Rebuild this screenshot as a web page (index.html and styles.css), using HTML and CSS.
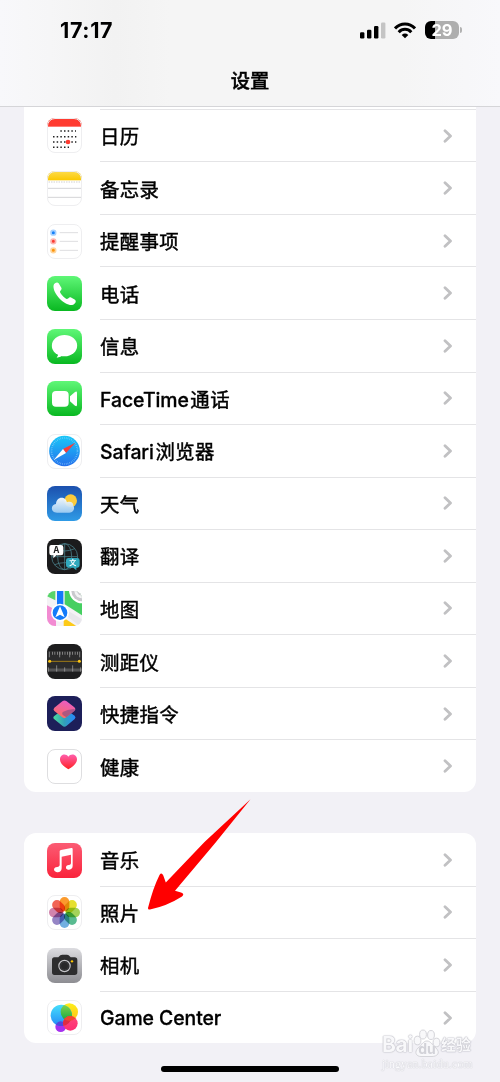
FILE: index.html
```html
<!DOCTYPE html>
<html lang="zh-CN">
<head>
<meta charset="utf-8">
<title>设置</title>
<link rel="stylesheet" href="styles.css">
</head>
<body>
<div class="phone">
  <header class="header">
    <div class="status">
      <span class="time">17:17</span>
      <svg class="signal" viewBox="0 0 26 17"><rect x="0" y="10.3" width="4.4" height="6.2" rx="1.2"/><rect x="7" y="7.8" width="4.4" height="8.7" rx="1.2"/><rect x="14" y="4" width="4.4" height="12.5" rx="1.2"/><rect x="21" y=".5" width="4.4" height="16" rx="1.2" fill="#c4c4c4"/></svg>
      <svg class="wifi" viewBox="0 0 22 17" fill="none" stroke="#000" stroke-width="3"><path d="M1 6.500C6.500.5 15.500.5 21 6.500"/><path d="M4.700 10.200C8.300 6.400 13.700 6.400 17.300 10.200"/><path d="M11 16.200L7.700 12.900Q11 10.200 14.300 12.900Z" fill="#000" stroke="none"/></svg>
      <div class="battery"><span>29</span></div>
      <i class="battery-cap"></i>
    </div>
    <h1 class="title">设置</h1>
  </header>
  <main class="content">
    <section class="card card-first">
      <div class="row">
        <svg class="icon outlined" viewBox="0 0 105 105"><rect width="105" height="105" fill="#fff"/><rect width="105" height="26" fill="#ff3b30"/><g stroke="#222" stroke-width="4.500" stroke-dasharray="4.500 6.500"><path d="M40 39H87M18 56H88M18 72H88M18 88H66"/></g><circle cx="63" cy="72" r="7" fill="#ff3b30"/></svg>
        <div class="cell"><span>日历</span><svg class="chev" viewBox="0 0 10 14"><path d="M2 1.700L7.500 7L2 12.300"/></svg></div>
      </div>
      <div class="row">
        <svg class="icon outlined" viewBox="0 0 105 105"><defs><linearGradient id="note" x2="0" y2="1"><stop stop-color="#fddc4e"/><stop offset="1" stop-color="#fbc800"/></linearGradient></defs><rect width="105" height="105" fill="#fff"/><rect width="105" height="28" fill="url(#note)"/><path d="M2 33H103" stroke="#b9b9b9" stroke-width="3" stroke-dasharray="2 3"/><path d="M0 52H105M0 79H105" stroke="#d4d4d6" stroke-width="3"/></svg>
        <div class="cell"><span>备忘录</span><svg class="chev" viewBox="0 0 10 14"><path d="M2 1.700L7.500 7L2 12.300"/></svg></div>
      </div>
      <div class="row">
        <svg class="icon outlined" viewBox="0 0 105 105"><rect width="105" height="105" fill="#fff"/><g stroke-width="5"><circle cx="19" cy="26" r="7" fill="#1681fb" stroke="#a6d0fe"/><circle cx="19" cy="52" r="7" fill="#fb3b32" stroke="#fdb4b0"/><circle cx="19" cy="79" r="7" fill="#fd9409" stroke="#fed59c"/></g><path d="M38 26H93M38 52H93M38 79H93" stroke="#dedee0" stroke-width="3"/></svg>
        <div class="cell"><span>提醒事项</span><svg class="chev" viewBox="0 0 10 14"><path d="M2 1.700L7.500 7L2 12.300"/></svg></div>
      </div>
      <div class="row">
        <svg class="icon" viewBox="0 0 105 105"><defs><linearGradient id="green" x2="0" y2="1"><stop stop-color="#5ff777"/><stop offset="1" stop-color="#09b821"/></linearGradient></defs><rect width="105" height="105" fill="url(#green)"/><path d="M20 27C22 21 31 16 35 22L43 35C46 40 39 43 39 48C42 56 52 66 59 69C64 69 66 62 71 64L84 71C90 76 83 84 78 86C68 90 50 80 38 68C26 56 17 38 20 27Z" fill="#fff"/></svg>
        <div class="cell"><span>电话</span><svg class="chev" viewBox="0 0 10 14"><path d="M2 1.700L7.500 7L2 12.300"/></svg></div>
      </div>
      <div class="row">
        <svg class="icon" viewBox="0 0 105 105"><rect width="105" height="105" fill="url(#green)"/><ellipse cx="52.500" cy="50" rx="38" ry="32" fill="#fff"/><path d="M33 72Q36 79 29 86Q42 84 49 77Z" fill="#fff"/></svg>
        <div class="cell"><span>信息</span><svg class="chev" viewBox="0 0 10 14"><path d="M2 1.700L7.500 7L2 12.300"/></svg></div>
      </div>
      <div class="row">
        <svg class="icon" viewBox="0 0 105 105"><rect width="105" height="105" fill="url(#green)"/><rect x="15" y="30" width="50" height="47" rx="12" fill="#fff"/><path d="M69 46L84 33Q90 29 90 36V71Q90 78 84 74L69 61Z" fill="#fff"/></svg>
        <div class="cell"><span><span class="latin face">FaceTime</span>通话</span><svg class="chev" viewBox="0 0 10 14"><path d="M2 1.700L7.500 7L2 12.300"/></svg></div>
      </div>
      <div class="row">
        <svg class="icon outlined" viewBox="0 0 105 105"><defs><linearGradient id="safari" x2="0" y2="1"><stop stop-color="#19c8f8"/><stop offset="1" stop-color="#2570ec"/></linearGradient></defs><rect width="105" height="105" fill="#fff"/><circle cx="52.500" cy="51" r="46" fill="url(#safari)"/><circle cx="52.500" cy="51" r="39" fill="none" stroke="#8fd0fa" stroke-width="5" stroke-dasharray="1.500 4"/><path d="M85 26L48 45L57 57Z" fill="#f93d38"/><path d="M20 78L48 45L57 57Z" fill="#fff"/></svg>
        <div class="cell"><span><span class="latin safari">Safari</span>浏览器</span><svg class="chev" viewBox="0 0 10 14"><path d="M2 1.700L7.500 7L2 12.300"/></svg></div>
      </div>
      <div class="row">
        <svg class="icon" viewBox="0 0 105 105"><defs><linearGradient id="sky" x2="0" y2="1"><stop stop-color="#1c50ae"/><stop offset="1" stop-color="#2f9be6"/></linearGradient><linearGradient id="cloud" x2="0" y2="1"><stop stop-color="#fff"/><stop offset="1" stop-color="#a3cff3"/></linearGradient></defs><rect width="105" height="105" fill="url(#sky)"/><circle cx="71" cy="44" r="19" fill="#fbcb3c"/><path d="M30 80C10 80 10 55 27 54C27 39 43 29 55 40C59 44 59 48 60 49C72 44 80 52 79 59C85 66 79 80 67 80Z" fill="url(#cloud)" opacity=".93"/></svg>
        <div class="cell"><span>天气</span><svg class="chev" viewBox="0 0 10 14"><path d="M2 1.700L7.500 7L2 12.300"/></svg></div>
      </div>
      <div class="row">
        <svg class="icon" viewBox="0 0 105 105"><rect width="105" height="105" fill="#1b1b1c"/><g fill="none" stroke="#477b84" stroke-width="2.500"><circle cx="53" cy="53" r="39"/><ellipse cx="53" cy="53" rx="21" ry="39"/><path d="M53 14V92M14 53H92M23 29Q53 43 83 29M23 77Q53 65 83 77"/></g><path d="M13 18H42Q49 18 49 25V42Q49 49 42 49H28L19 58V49H13Q7 49 7 42V25Q7 18 13 18Z" fill="#fff"/><path d="M64 57H91Q98 57 98 64V79Q98 86 91 86H88V94L79 86H64Q57 86 57 79V64Q57 57 64 57Z" fill="#31a9bd"/><text class="glyph-a" x="28" y="41">A</text><text class="glyph-w" x="77" y="79">文</text></svg>
        <div class="cell"><span>翻译</span><svg class="chev" viewBox="0 0 10 14"><path d="M2 1.700L7.500 7L2 12.300"/></svg></div>
      </div>
      <div class="row">
        <svg class="icon" viewBox="0 0 105 105"><rect width="105" height="105" fill="#f4f2f5"/><path d="M0 0H25V28L0 16Z" fill="#58d56a"/><path d="M53 0H105V73L53 40Z" fill="#45cf61"/><path d="M66 0A40 40 0 0 0 105 37V0Z" fill="#fff"/><path d="M73 0A32 32 0 0 0 105 31V0Z" fill="#c9c9cd"/><path d="M82 0A23 23 0 0 0 105 22V0Z" fill="#f3f3f4"/><path d="M90 0A15 15 0 0 0 105 14V0Z" fill="#c9c9cd"/><path d="M0 43L27 57V105H0Z" fill="#f28bd2"/><path d="M50 80L88 105H50Z" fill="#fdca19"/><path d="M68 62L105 85V105H98L60 76Z" fill="#e8e7ec"/><path d="M30 0H49V52H30Z" fill="#1478fa"/><circle cx="39" cy="65" r="27" fill="#fff"/><circle cx="39" cy="65" r="22" fill="#147bfa"/><path d="M39 46L53 79L39 71L25 79Z" fill="#fff"/></svg>
        <div class="cell"><span>地图</span><svg class="chev" viewBox="0 0 10 14"><path d="M2 1.700L7.500 7L2 12.300"/></svg></div>
      </div>
      <div class="row">
        <svg class="icon" viewBox="0 0 105 105"><rect width="105" height="105" fill="#1d1d1e"/><path d="M0 21H105V83H0Z" fill="#2b2b2c"/><g stroke="#aaa" stroke-width="2"><path d="M7 23V40M38 23V40M68 23V40M98 23V40M29 64V83M77 64V83M53 70V83M4 70V83M101 70V83"/><path d="M15 28H97" stroke-width="9" stroke-dasharray="2 5.600"/><path d="M5 78H103" stroke-width="9" stroke-dasharray="2 4"/></g><path d="M8 52H97" stroke="#b78b12" stroke-width="2.500"/><circle cx="8" cy="52" r="4.500" fill="#ffc817"/><circle cx="97" cy="52" r="4.500" fill="#ffc817"/></svg>
        <div class="cell"><span>测距仪</span><svg class="chev" viewBox="0 0 10 14"><path d="M2 1.700L7.500 7L2 12.300"/></svg></div>
      </div>
      <div class="row">
        <svg class="icon" viewBox="0 0 105 105"><defs><linearGradient id="sc1" x2="1" y2="0"><stop stop-color="#4bdc9c"/><stop offset=".5" stop-color="#329fb9"/><stop offset="1" stop-color="#2588ff"/></linearGradient><linearGradient id="sc2" x1=".7" y1="0" x2=".3" y2="1"><stop stop-color="#e95bc9"/><stop offset=".9" stop-color="#fa6b67"/></linearGradient></defs><rect width="105" height="105" fill="#1d1f59"/><path d="M47 41Q52 38 57 41L83 59Q88 64 83 69L59 89Q52 95 46 89L22 70Q16 65 22 60Z" fill="url(#sc1)"/><path d="M46 16Q52 11 59 16L82 34Q88 40 82 45L58 64Q52 69 46 64L22 45Q17 40 22 35Z" fill="url(#sc2)"/><path d="M62 42L80 39Q87 41 82 45L58 64L49 58Q42 52 49 47Z" fill="#7c4c80" opacity=".6"/></svg>
        <div class="cell"><span>快捷指令</span><svg class="chev" viewBox="0 0 10 14"><path d="M2 1.700L7.500 7L2 12.300"/></svg></div>
      </div>
      <div class="row">
        <svg class="icon outlined dark" viewBox="0 0 105 105"><defs><linearGradient id="heart" x2="0" y2="1"><stop stop-color="#ff5fae"/><stop offset="1" stop-color="#ff2224"/></linearGradient></defs><rect width="105" height="105" fill="#fff"/><path d="M64 61C49 52 39 43 39 31C39 14 58 12 64 23C71 12 90 15 90 31C90 43 78 53 64 61Z" fill="url(#heart)"/></svg>
        <div class="cell"><span>健康</span><svg class="chev" viewBox="0 0 10 14"><path d="M2 1.700L7.500 7L2 12.300"/></svg></div>
      </div>
    </section>
    <section class="card">
      <div class="row">
        <svg class="icon" viewBox="0 0 105 105"><defs><linearGradient id="music" x2="0" y2="1"><stop stop-color="#fb5c74"/><stop offset="1" stop-color="#fa233b"/></linearGradient></defs><rect width="105" height="105" fill="url(#music)"/><path d="M38 25Q38 22 42 21L73 15Q77 14 77 18V69C77 78 69 81 63 80C54 79 56 68 62 67L69 65Q72 64 72 60V35L44 41V76C44 86 35 89 28 87C19 85 19 75 27 73L34 71Q38 70 38 66Z" fill="#fff"/></svg>
        <div class="cell"><span>音乐</span><svg class="chev" viewBox="0 0 10 14"><path d="M2 1.700L7.500 7L2 12.300"/></svg></div>
      </div>
      <div class="row">
        <svg class="icon outlined" viewBox="0 0 105 105"><rect width="105" height="105" fill="#fff"/><g class="petals"><rect x="38" y="6" width="29" height="43" rx="14.500" fill="#fb9a2d"/><rect x="38" y="6" width="29" height="43" rx="14.500" fill="#e5e02f" transform="rotate(45 52.500 52.500)"/><rect x="38" y="6" width="29" height="43" rx="14.500" fill="#a4d35a" transform="rotate(90 52.500 52.500)"/><rect x="38" y="6" width="29" height="43" rx="14.500" fill="#59bb91" transform="rotate(135 52.500 52.500)"/><rect x="38" y="6" width="29" height="43" rx="14.500" fill="#71afe1" transform="rotate(180 52.500 52.500)"/><rect x="38" y="6" width="29" height="43" rx="14.500" fill="#9585c5" transform="rotate(225 52.500 52.500)"/><rect x="38" y="6" width="29" height="43" rx="14.500" fill="#d284ad" transform="rotate(270 52.500 52.500)"/><rect x="38" y="6" width="29" height="43" rx="14.500" fill="#f16456" transform="rotate(315 52.500 52.500)"/></g></svg>
        <div class="cell"><span>照片</span><svg class="chev" viewBox="0 0 10 14"><path d="M2 1.700L7.500 7L2 12.300"/></svg></div>
      </div>
      <div class="row">
        <svg class="icon" viewBox="0 0 105 105"><defs><linearGradient id="cam" x2="0" y2="1"><stop stop-color="#dcdce0"/><stop offset="1" stop-color="#8d8d92"/></linearGradient></defs><rect width="105" height="105" fill="url(#cam)"/><path d="M22 28H34L40 22Q42 20 46 20H60Q63 20 65 22L71 28H83Q91 28 91 36V73Q91 81 83 81H22Q15 81 15 73V36Q15 28 22 28Z" fill="#2d2d2e"/><circle cx="52.500" cy="54" r="17" fill="#282829" stroke="#c4c4c7" stroke-width="3.500"/><circle cx="52.500" cy="54" r="12" fill="none" stroke="#404042" stroke-width="2"/><circle cx="75" cy="40" r="3.500" fill="#ffc800"/></svg>
        <div class="cell"><span>相机</span><svg class="chev" viewBox="0 0 10 14"><path d="M2 1.700L7.500 7L2 12.300"/></svg></div>
      </div>
      <div class="row">
        <svg class="icon outlined" viewBox="0 0 105 105"><defs><linearGradient id="gb" x2="0" y2="1"><stop stop-color="#46dffb"/><stop offset="1" stop-color="#238bf7"/></linearGradient><linearGradient id="gy" x2="0" y2="1"><stop stop-color="#fdef1a"/><stop offset="1" stop-color="#ffc018"/></linearGradient><linearGradient id="gg" x2="0" y2="1"><stop stop-color="#8cd64b"/><stop offset="1" stop-color="#16a844"/></linearGradient><linearGradient id="gp" x2="0" y2="1"><stop stop-color="#ff487c"/><stop offset="1" stop-color="#fd2d72"/></linearGradient><clipPath id="blueclip"><circle cx="43" cy="46" r="32"/></clipPath><clipPath id="pinkclip"><circle cx="70" cy="70" r="22"/></clipPath></defs><rect width="105" height="105" fill="#fff"/><circle cx="41" cy="80" r="16" fill="#a630ef"/><circle cx="67" cy="36" r="26" fill="url(#gy)"/><circle cx="43" cy="46" r="32" fill="url(#gb)"/><g clip-path="url(#blueclip)"><circle cx="67" cy="36" r="26" fill="url(#gg)"/><circle cx="41" cy="80" r="16" fill="#5148dd"/></g><circle cx="70" cy="70" r="22" fill="url(#gp)"/><g clip-path="url(#pinkclip)"><circle cx="43" cy="46" r="32" fill="#df2c41"/><circle cx="67" cy="36" r="26" fill="#f14830"/></g></svg>
        <div class="cell"><span class="latin">Game Center</span><svg class="chev" viewBox="0 0 10 14"><path d="M2 1.700L7.500 7L2 12.300"/></svg></div>
      </div>
    </section>
  </main>
  <svg class="arrow" viewBox="0 0 106 114"><path d="M103.500 2.300L57.500 45L18.800 85.500L16.300 78.500Q14.500 75 12.500 78Q6 91 1 111Q.8 113 3 112.500Q20 109 35 99.500Q38 97 34 95.500L28 93.700L68 46.300Z"/></svg>
  <div class="watermark">
    <div class="brand"><b>Bai</b><svg viewBox="0 0 28 28"><ellipse cx="4.500" cy="11.500" rx="3.400" ry="4.300"/><ellipse cx="10" cy="5.500" rx="3.400" ry="4.500"/><ellipse cx="18" cy="6" rx="3.400" ry="4.500"/><ellipse cx="23.500" cy="13.500" rx="3.400" ry="4.300"/><path d="M14 12C18 12 19 16 23 19C28 24 24 27.500 19 27.500H8C3 27.500 1 23 5 19C9 16 10 12 14 12Z"/><text x="14" y="25">du</text></svg><b class="cn">经验</b></div>
    <div class="site">jingyan.baidu.com</div>
  </div>
  <div class="home"></div>
</div>
</body>
</html>
```
FILE: styles.css
```css
* { box-sizing: border-box; }
body { margin: 0; background: #f2f1f6; }
.phone {
  position: relative;
  width: 500px;
  height: 1082px;
  overflow: hidden;
  background: #f2f1f6;
  color: #000;
  font-family: Inter, "Noto Sans CJK SC", sans-serif;
}
.header {
  height: 107px;
  border-bottom: 1px solid #d5d5d8;
  background: linear-gradient(90deg, #f8f8fb 0, #f6f6f7 50px, #f2f2f2 115px, #f5f5f5 170px, #f5f5f5 400px, #f8f8fb 100%);
}
.status {
  display: flex;
  align-items: center;
  height: 60px;
  padding-left: 60px;
}
.time {
  width: 300px;
  font-size: 21.500px;
  font-weight: 700;
  letter-spacing: .65px;
}
.signal { width: 26px; height: 17px; }
.wifi { width: 22px; height: 17px; margin-left: 8px; }
.battery {
  width: 34px;
  height: 18px;
  margin-left: 9px;
  border-radius: 6px;
  background: linear-gradient(90deg, #000 10px, #aeaeae 10px);
  color: #fff;
  font-size: 16.500px;
  font-weight: 700;
  line-height: 18px;
  text-align: center;
}
.battery-cap { width: 2px; height: 6px; margin-left: 1px; border-radius: 0 2px 2px 0; background: #b2b2b2; }
.title {
  margin: 6px 0 0;
  text-align: center;
  font-size: 19.300px;
  font-weight: 500;
  line-height: 30px;
  -webkit-text-stroke: .4px #000;
}
.content { padding: 0 24px; }
.card { border-radius: 12px; background: #fff; overflow: hidden; }
.card-first { margin-bottom: 41.200px; padding-top: 1.800px; border-radius: 0 0 12px 12px; }
.row { display: flex; align-items: center; height: 52.560px; padding-left: 23px; }
.icon { flex: none; width: 35px; height: 35px; margin-top: 1.800px; border-radius: 8px; }
.outlined { outline: 1px solid #eeeef0; outline-offset: -1px; }
.dark { outline-color: #dedee0; }
.cell {
  display: flex;
  flex: 1;
  align-items: center;
  justify-content: space-between;
  height: 100%;
  margin-left: 18px;
  padding: 0 23px 0 0;
  border-top: 1px solid #e4e4e6;
  font-size: 19.400px;
  font-weight: 400;
  letter-spacing: .4px;
  -webkit-text-stroke: .45px #000;
}
.card:not(.card-first) .row:first-child .cell { border-top-color: transparent; }
.latin { font-size: 19.400px; font-weight: 500; letter-spacing: -.05px; -webkit-text-stroke: .3px #000; }
.face, .safari { margin-right: 1.500px; }
.chev { width: 10px; height: 14px; fill: none; stroke: #c1c1c3; stroke-width: 2.800; stroke-linecap: round; stroke-linejoin: round; }
.glyph-a { font: 700 25px Inter, sans-serif; text-anchor: middle; fill: #222; }
.glyph-w { font: 700 21px "Noto Sans CJK SC", sans-serif; text-anchor: middle; fill: #fff; }
.petals { isolation: isolate; }
.petals rect { mix-blend-mode: multiply; }
.arrow { position: absolute; left: 147px; top: 797px; width: 106px; height: 114px; fill: #f00; }
.watermark { position: absolute; left: 382px; top: 1028px; width: 95px; }
.brand { display: flex; align-items: flex-end; height: 29px; color: #f8f8fa; text-shadow: 0 0 1px #b8b8c0, 0 0 1px #b8b8c0, 0 0 2px #c8c8d0; }
.brand b { width: 31px; font-size: 21px; line-height: 24px; letter-spacing: -.3px; }
.brand svg { flex: none; width: 28px; height: 28px; fill: #f8f8fa; stroke: #d5d5da; stroke-width: 1; }
.brand text { font: 700 14px Inter, sans-serif; text-anchor: middle; fill: #d2d2d8; stroke: none; text-shadow: none; }
.brand .cn { flex: none; font-size: 15px; line-height: 24px; letter-spacing: 0; }
.site { color: #fbfbfd; font: 11.500px/14px "Liberation Serif", serif; text-shadow: 0 0 1px #c0c0c8, 0 0 1px #ceced5; letter-spacing: .3px; }
.home { position: absolute; left: 161px; top: 1066px; width: 178px; height: 6px; border-radius: 3px; background: #000; }
```
